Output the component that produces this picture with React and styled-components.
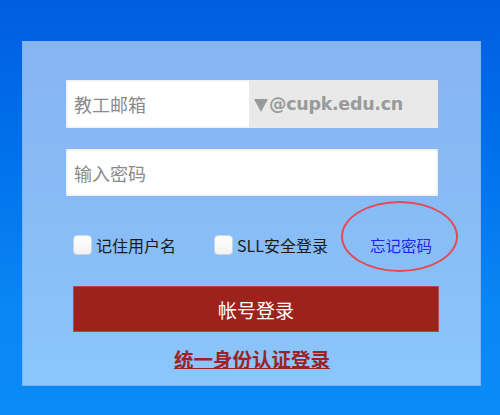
import React from 'react'
import styled, { createGlobalStyle } from 'styled-components'

const GlobalStyle = createGlobalStyle`
  html, body {
    margin: 0;
    padding: 0;
  }
  body {
    width: 500px;
    height: 415px;
    overflow: hidden;
    font-family: "Noto Sans CJK SC", "Noto Sans", sans-serif;
  }
`

function App() {
  return (
    <Page>
      <GlobalStyle />
      <Panel>
        <EmailBox>
          <Field placeholder="教工邮箱" />
          <Domain>
            <Arrow />@cupk.edu.cn
          </Domain>
        </EmailBox>
        <PasswordBox>
          <Field type="password" placeholder="输入密码" />
        </PasswordBox>
        <OptionRow>
          <Check>
            <Box />
            记住用户名
          </Check>
          <Check>
            <Box />
            SLL安全登录
          </Check>
          <Forgot>
            忘记密码
            <Ring />
          </Forgot>
        </OptionRow>
        <LoginButton>帐号登录</LoginButton>
        <SsoLink>统一身份认证登录</SsoLink>
      </Panel>
    </Page>
  )
}

export default App

const Page = styled.div`

  width: 500px;
  height: 415px;
  box-sizing: border-box;
  padding: 41px 19px 0px 22px;
  background: linear-gradient(180deg, #005de2 0%, #0070ea 35%, #0a86f5 75%, #0a8bf8 100%);

`

const Panel = styled.div`

  width: 459px;
  height: 345px;
  box-sizing: border-box;
  padding: 38px 0px 0px 43px;
  background: linear-gradient(180deg, #87b4f2 0%, #88bcf7 50%, #8bc6fd 100%);
  border: 1px solid #7fb2f0;
  display: flex;
  flex-direction: column;

`

const InputBox = styled.div`

  width: 372px;
  height: 48px;
  display: flex;
  background: #fff;
  box-shadow: inset 0 0 3px rgba(0, 0, 0, 0.18);

`

const EmailBox = styled(InputBox)``

const PasswordBox = styled(InputBox)`

  margin-top: 21px;
  height: 47px;

`

const Field = styled.input`

  flex: 1;
  min-width: 0;
  border: none;
  outline: none;
  background: transparent;
  padding: 0 0 0 8px;
  font-family: "Noto Sans CJK SC", sans-serif;
  font-size: 18px;
  color: #333;

  &::placeholder {
    color: #8a8a8a;
  }

`

const Domain = styled.div`

  width: 189px;
  display: flex;
  align-items: center;
  padding-left: 5px;
  box-sizing: border-box;
  background: #e9e9e9;
  color: #9a9a9a;
  font-family: "DejaVu Sans", "Liberation Sans", sans-serif;
  font-weight: 700;
  font-size: 17.5px;
  letter-spacing: -0.3px;

`

const Arrow = styled.span`

  width: 0;
  height: 0;
  border-left: 7px solid transparent;
  border-right: 7px solid transparent;
  border-top: 13px solid #9a9a9a;
  margin: 2px 1px 0px 0px;

`

const OptionRow = styled.div`

  display: flex;
  align-items: center;
  margin-top: 37px;
  padding-left: 7px;
  height: 24px;

`

const Check = styled.label`

  display: flex;
  align-items: center;
  font-size: 16px;
  color: #1a1a1a;
  margin-right: 38px;
  white-space: nowrap;

  &:nth-child(2) {
    margin-right: 42px;
  }

`

const Box = styled.span`

  width: 19px;
  height: 20px;
  box-sizing: border-box;
  background: linear-gradient(180deg, #ffffff, #f2f2f2);
  border: 1px solid #c9d4e4;
  border-radius: 4px;
  margin-right: 4px;

`

const Forgot = styled.a`

  position: relative;
  font-size: 15.5px;
  color: #2424e8;
  white-space: nowrap;

`

const Ring = styled.span`

  position: absolute;
  left: -29px;
  top: -33px;
  width: 113px;
  height: 67px;
  border: 2px solid #e84850;
  border-radius: 50%;

`

const LoginButton = styled.button`

  width: 366px;
  height: 46px;
  margin: 29px 0px 0px 7px;
  border: 1px solid #b04a4a;
  background: #9d221b;
  color: #fff;
  font-family: "Noto Sans CJK SC", sans-serif;
  font-size: 19px;
  cursor: pointer;

`

const SsoLink = styled.a`

  align-self: center;
  margin: 12px 0px 0px -42px;
  font-size: 19.5px;
  font-weight: 700;
  color: #9d2222;
  text-decoration: underline;

`
